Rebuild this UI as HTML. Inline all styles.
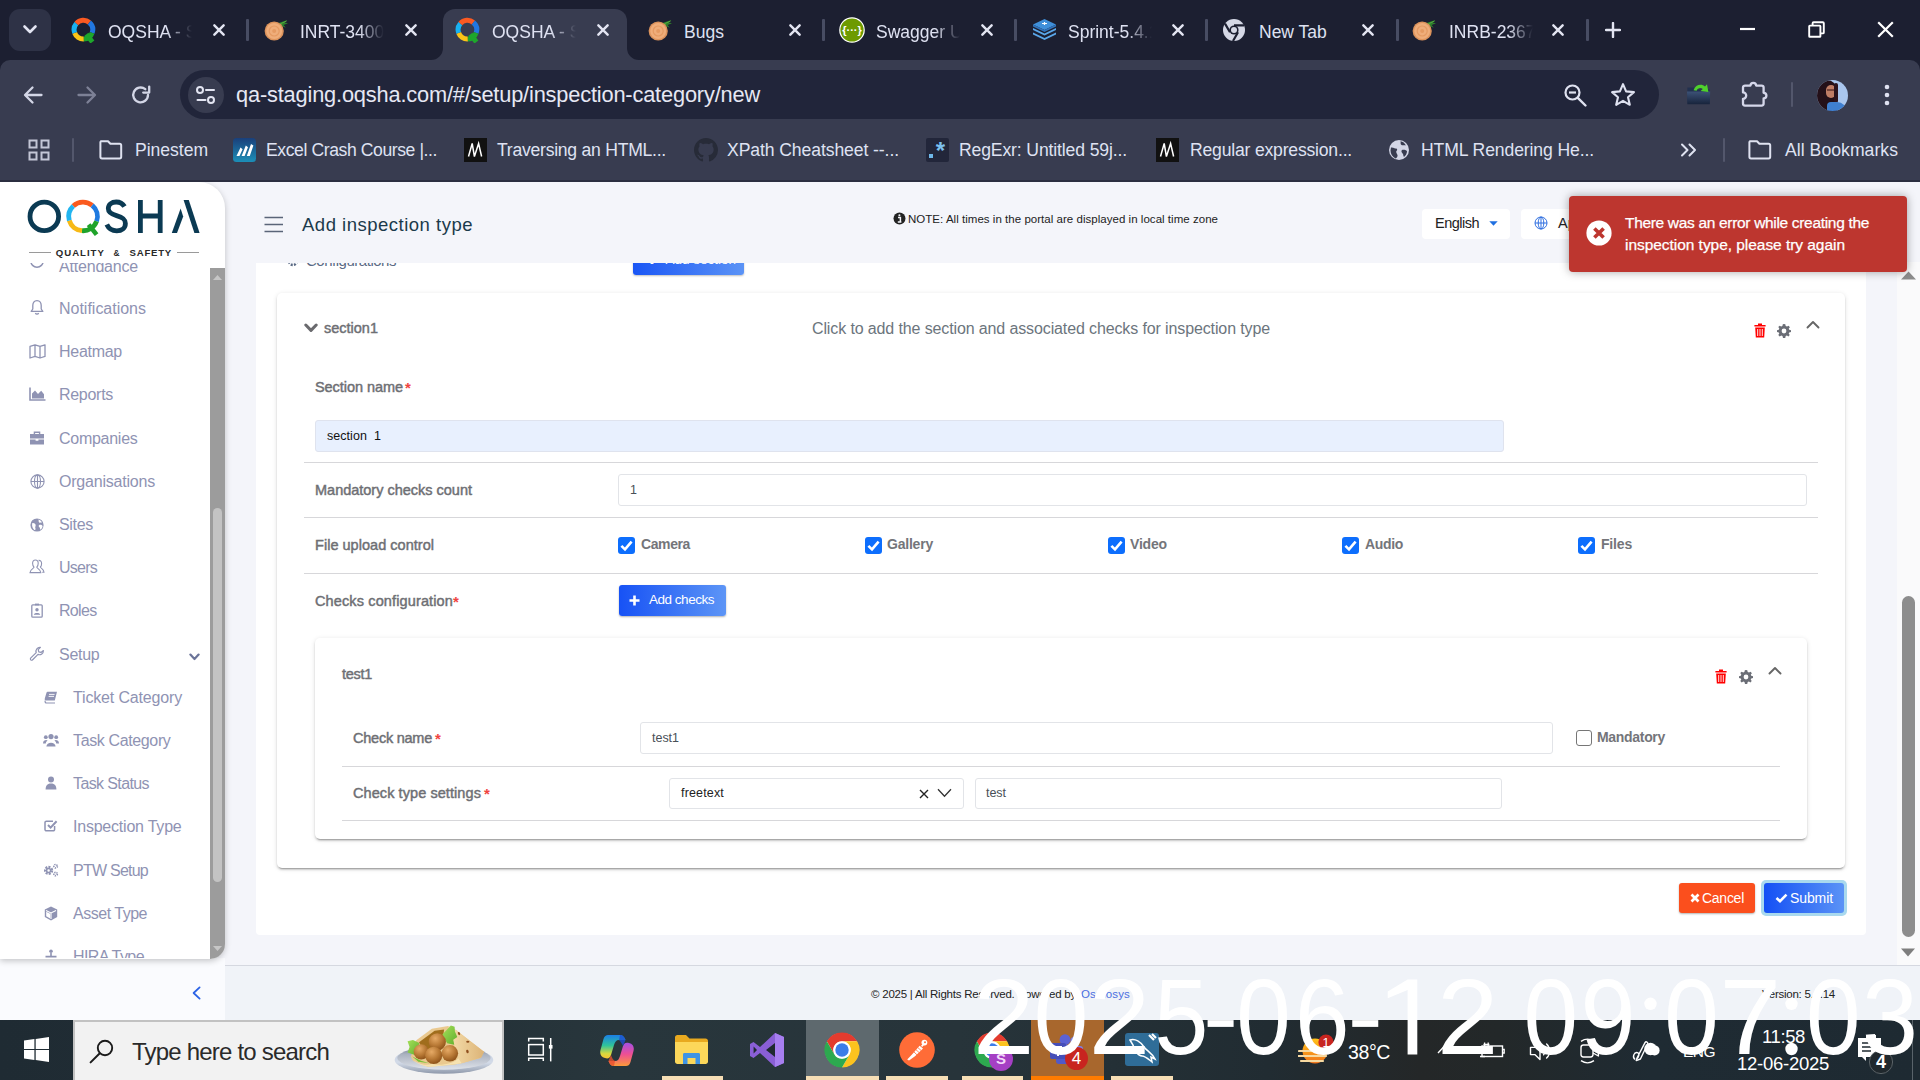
<!DOCTYPE html>
<html lang="en">
<head>
<meta charset="utf-8">
<title>OQSHA - Setup</title>
<style>
*{box-sizing:border-box;margin:0;padding:0}
html,body{width:1920px;height:1080px;overflow:hidden;background:#f4f5fa}
body{position:relative;font-family:"Liberation Sans",sans-serif;color:#222}
.abs{position:absolute}
.t{position:absolute;white-space:nowrap;line-height:1}
svg{display:block}
/* ---------- browser chrome ---------- */
#tabstrip{position:absolute;left:0;top:0;width:1920px;height:75px;background:#1c1f31}
#toolbar{position:absolute;left:0;top:60px;width:1920px;height:122px;background:#383c50;border-top-left-radius:10px}
#chromeline{position:absolute;left:0;top:180px;width:1920px;height:2px;background:#2b2e40}
.tabtxt{position:absolute;top:21px;font-size:17.5px;color:#dfe2f2;white-space:nowrap;line-height:22px;overflow:hidden}
.tabx{position:absolute;top:24px;width:12px;height:12px}
.tsep{position:absolute;top:19px;width:2.5px;height:22px;background:#484d63;border-radius:1px}
.bm{position:absolute;top:139px;font-size:17.6px;color:#dfe2f2;white-space:nowrap;line-height:22px}
/* ---------- page ---------- */
#page{position:absolute;left:0;top:182px;width:1920px;height:838px;background:#f4f5fa;overflow:hidden}
.side{position:absolute;font-size:16px;color:#8f93b3;white-space:nowrap;line-height:20px}
.lbl{position:absolute;font-size:14.5px;color:#6e6f74;white-space:nowrap;line-height:18px;-webkit-text-stroke:0.45px #6e6f74}
.hr{position:absolute;height:1px;background:#d7d7da}
.inp{position:absolute;background:#fff;border:1px solid #e2e4e8;border-radius:3px}
.itx{position:absolute;font-size:12.5px;color:#495057;white-space:nowrap;line-height:16px}
.cb{position:absolute;width:17px;height:17px;border-radius:3px;background:#0d6efd}
.cbl{position:absolute;font-size:14px;font-weight:bold;color:#74757a;white-space:nowrap;line-height:18px}
/* ---------- taskbar ---------- */
#taskbar{position:absolute;left:0;top:1020px;width:1920px;height:60px;background:linear-gradient(90deg,#1f2b33 0%,#222f36 20%,#28363c 32%,#27343a 50%,#212c32 66%,#242728 74%,#232829 78%,#1f2b33 86%,#1e2a32 100%);overflow:hidden}
.tbu{position:absolute;top:56px;height:4px;background:#f6deb5}
</style>
</head>
<body>
<!--PAGE-->
<!-- page background -->
<div class="abs" style="left:0;top:182px;width:1920px;height:838px;background:#f4f5fa"></div>

<!-- content scroll area -->
<div class="abs" id="content" style="left:225px;top:262px;width:1673px;height:703px;overflow:hidden">
 <div class="abs" style="left:-225px;top:-262px;width:1920px;height:1080px">
  <!-- white panel -->
  <div class="abs" style="left:256px;top:200px;width:1610px;height:735px;background:#fff;border-radius:0 0 4px 4px"></div>
  <!-- cut-off row above -->
  <div class="t" style="letter-spacing:-0.481px;left:306px;top:252px;font-size:15px;line-height:18px;color:#5a6a85">Configurations</div>
  <svg class="abs" style="left:287px;top:254px" width="12" height="14" viewBox="0 0 12 14"><circle cx="6" cy="7" r="4" fill="none" stroke="#5a6a85" stroke-width="2.5" stroke-dasharray="2 1.2"/></svg>
  <div class="abs" style="left:633px;top:244px;width:111px;height:31px;border-radius:3px;background:linear-gradient(90deg,#1a56f5,#5b93f6);box-shadow:0 1px 2px rgba(0,0,0,.25)"></div>
  <div class="t" style="left:646px;top:252px;font-size:13.5px;line-height:16px;color:#fff">✚ &nbsp;Add section</div>

  <!-- section card -->
  <div class="abs" style="left:277px;top:293px;width:1568px;height:575px;background:#fff;border-radius:5px;box-shadow:0 3px 1px -2px rgba(0,0,0,.2),0 2px 2px 0 rgba(0,0,0,.14),0 1px 5px 0 rgba(0,0,0,.12)"></div>
  <svg class="abs" style="left:304px;top:323px" width="14" height="10" viewBox="0 0 14 10"><path d="M1.8 2 L7 7.4 L12.2 2" fill="none" stroke="#6a6a6e" stroke-width="3" stroke-linecap="round" stroke-linejoin="round"/></svg>
  <div class="lbl" style="letter-spacing:-0.002px;left:324px;top:319px">section1</div>
  <div class="t" style="letter-spacing:-0.122px;left:812px;top:319px;font-size:16px;line-height:19px;color:#6c757d">Click to add the section and associated checks for inspection type</div>
  <svg class="abs" style="left:1754px;top:323px" width="12" height="15" viewBox="0 0 12 15"><use href="#trash"/></svg>
  <svg class="abs" style="left:1777px;top:324px" width="14" height="14" viewBox="0 0 14 14"><use href="#gear"/></svg>
  <svg class="abs" style="left:1806px;top:320px" width="14" height="9" viewBox="0 0 14 9"><path d="M1.5 7.5 L7 2 L12.5 7.5" fill="none" stroke="#666" stroke-width="1.9" stroke-linecap="round" stroke-linejoin="round"/></svg>

  <div class="lbl" style="letter-spacing:-0.056px;left:315px;top:378px">Section name</div>
  <div class="t" style="left:405px;top:379px;font-size:15px;line-height:18px;color:#f0453f;font-weight:bold">*</div>
  <div class="inp" style="left:315px;top:420px;width:1189px;height:32px;background:#e8f0fe;border-color:#dfe3ee"></div>
  <div class="itx" style="letter-spacing:0.048px;left:327px;top:428px;color:#111">section&nbsp;&nbsp;1</div>
  <div class="hr" style="left:304px;top:462px;width:1514px"></div>

  <div class="lbl" style="letter-spacing:-0.008px;left:315px;top:481px">Mandatory checks count</div>
  <div class="inp" style="left:618px;top:474px;width:1189px;height:32px"></div>
  <div class="itx" style="left:630px;top:482px">1</div>
  <div class="hr" style="left:304px;top:517px;width:1514px"></div>

  <div class="lbl" style="letter-spacing:0.026px;left:315px;top:536px">File upload control</div>
  <div class="cb" style="left:618px;top:537px"><svg width="17" height="17" viewBox="0 0 17 17"><use href="#chk"/></svg></div>
  <div class="cbl" style="letter-spacing:-0.396px;left:641px;top:535px">Camera</div>
  <div class="cb" style="left:865px;top:537px"><svg width="17" height="17" viewBox="0 0 17 17"><use href="#chk"/></svg></div>
  <div class="cbl" style="letter-spacing:-0.212px;left:887px;top:535px">Gallery</div>
  <div class="cb" style="left:1108px;top:537px"><svg width="17" height="17" viewBox="0 0 17 17"><use href="#chk"/></svg></div>
  <div class="cbl" style="letter-spacing:-0.175px;left:1130px;top:535px">Video</div>
  <div class="cb" style="left:1342px;top:537px"><svg width="17" height="17" viewBox="0 0 17 17"><use href="#chk"/></svg></div>
  <div class="cbl" style="letter-spacing:-0.331px;left:1365px;top:535px">Audio</div>
  <div class="cb" style="left:1578px;top:537px"><svg width="17" height="17" viewBox="0 0 17 17"><use href="#chk"/></svg></div>
  <div class="cbl" style="letter-spacing:-0.181px;left:1601px;top:535px">Files</div>
  <div class="hr" style="left:304px;top:573px;width:1514px"></div>

  <div class="lbl" style="letter-spacing:0.129px;left:315px;top:592px">Checks configuration</div>
  <div class="t" style="left:453px;top:593px;font-size:15px;line-height:18px;color:#f0453f;font-weight:bold">*</div>
  <div class="abs" style="left:618.6px;top:585.4px;width:107px;height:30.8px;border-radius:3px;background:linear-gradient(90deg,#1752f5,#5d95f6);box-shadow:0 1px 2px rgba(0,0,0,.3)"></div>
  <svg class="abs" style="left:629px;top:595px" width="11" height="11" viewBox="0 0 11 11"><path d="M5.5 0.5 V10.5 M0.5 5.5 H10.5" stroke="#fff" stroke-width="2.6"/></svg>
  <div class="t" style="letter-spacing:-0.480px;left:649px;top:592px;font-size:13.5px;line-height:16px;color:#fff">Add checks</div>

  <!-- inner check card -->
  <div class="abs" style="left:315px;top:638px;width:1492px;height:201px;background:#fff;border-radius:5px;box-shadow:0 3px 1px -2px rgba(0,0,0,.2),0 2px 2px 0 rgba(0,0,0,.14),0 1px 5px 0 rgba(0,0,0,.12)"></div>
  <div class="lbl" style="letter-spacing:-0.287px;left:342px;top:665px">test1</div>
  <svg class="abs" style="left:1715px;top:669px" width="12" height="15" viewBox="0 0 12 15"><use href="#trash"/></svg>
  <svg class="abs" style="left:1739px;top:670px" width="14" height="14" viewBox="0 0 14 14"><use href="#gear"/></svg>
  <svg class="abs" style="left:1768px;top:666px" width="14" height="9" viewBox="0 0 14 9"><path d="M1.5 7.5 L7 2 L12.5 7.5" fill="none" stroke="#666" stroke-width="1.9" stroke-linecap="round" stroke-linejoin="round"/></svg>

  <div class="lbl" style="letter-spacing:-0.241px;left:353px;top:729px">Check name</div>
  <div class="t" style="left:435px;top:730px;font-size:15px;line-height:18px;color:#f0453f;font-weight:bold">*</div>
  <div class="inp" style="left:640px;top:722px;width:913px;height:32px"></div>
  <div class="itx" style="letter-spacing:-0.022px;left:652px;top:730px">test1</div>
  <div class="abs" style="left:1575.5px;top:730px;width:16px;height:16px;border:1.6px solid #767676;border-radius:3px;background:#fff"></div>
  <div class="cbl" style="letter-spacing:-0.311px;left:1597px;top:728px">Mandatory</div>
  <div class="hr" style="left:342px;top:766px;width:1438px"></div>

  <div class="lbl" style="letter-spacing:0.076px;left:353px;top:784px">Check type settings</div>
  <div class="t" style="left:484px;top:785px;font-size:15px;line-height:18px;color:#f0453f;font-weight:bold">*</div>
  <div class="inp" style="left:669px;top:778px;width:295px;height:31px"></div>
  <div class="itx" style="letter-spacing:0.164px;left:681px;top:785px;color:#222">freetext</div>
  <svg class="abs" style="left:919px;top:789px" width="10" height="10" viewBox="0 0 10 10"><path d="M1 1 L9 9 M9 1 L1 9" stroke="#222" stroke-width="1.4"/></svg>
  <svg class="abs" style="left:937px;top:788px" width="15" height="10" viewBox="0 0 15 10"><path d="M1 1.2 L7.5 8.2 L14 1.2" fill="none" stroke="#333" stroke-width="1.3"/></svg>
  <div class="inp" style="left:975px;top:778px;width:527px;height:31px"></div>
  <div class="itx" style="letter-spacing:-0.039px;left:986px;top:785px">test</div>
  <div class="hr" style="left:342px;top:820px;width:1438px"></div>

  <!-- buttons -->
  <div class="abs" style="left:1679px;top:883px;width:76px;height:30px;border-radius:3px;background:#fb4f1d;box-shadow:0 1px 2px rgba(0,0,0,.3)"></div>
  <svg class="abs" style="left:1690px;top:893px" width="10" height="10" viewBox="0 0 10 10"><path d="M1.5 1.5 L8.5 8.5 M8.5 1.5 L1.5 8.5" stroke="#fff" stroke-width="2.7"/></svg>
  <div class="t" style="letter-spacing:-0.266px;left:1702px;top:890px;font-size:14px;line-height:16px;color:#fff">Cancel</div>
  <div class="abs" style="left:1761px;top:880px;width:86px;height:36px;border-radius:5px;background:#a9d9ee"></div>
  <div class="abs" style="left:1764px;top:883px;width:80px;height:30px;border-radius:3px;background:linear-gradient(90deg,#1450f5,#5b93f6)"></div>
  <svg class="abs" style="left:1775px;top:893px" width="13" height="10" viewBox="0 0 13 10"><path d="M1.5 5 L5 8.2 L11.5 1.6" fill="none" stroke="#fff" stroke-width="2.6"/></svg>
  <div class="t" style="letter-spacing:-0.096px;left:1790px;top:890px;font-size:14px;line-height:16px;color:#fff">Submit</div>
 </div>
</div>

<!-- header overlay -->
<div class="abs" style="left:225px;top:182px;width:1695px;height:81px;background:#f4f5fa"></div>
<svg class="abs" style="left:264px;top:216px" width="20" height="17" viewBox="0 0 20 17"><path d="M0.5 1.5 H19 M0.5 8.5 H19 M0.5 15.5 H19" stroke="#5a6578" stroke-width="1.5"/></svg>
<div class="t" style="letter-spacing:0.502px;left:302px;top:214px;font-size:18.5px;line-height:22px;color:#1b3a4b">Add inspection type</div>
<svg class="abs" style="left:893px;top:212px" width="13" height="13" viewBox="0 0 13 13"><circle cx="6.5" cy="6.5" r="6" fill="#222"/><path d="M5 5.6 H7.4 V9.8 M4.8 10 H8.4" stroke="#f4f5fa" stroke-width="1.5" fill="none"/><circle cx="6.4" cy="3.2" r="1.05" fill="#f4f5fa"/></svg>
<div class="t" style="letter-spacing:0.031px;left:908px;top:212px;font-size:11.5px;line-height:14px;color:#222">NOTE: All times in the portal are displayed in local time zone</div>
<div class="abs" style="left:1422px;top:209px;width:88px;height:30px;border-radius:4px;background:#fff"></div>
<div class="t" style="letter-spacing:-0.509px;left:1435px;top:215px;font-size:14.5px;line-height:17px;color:#222">English</div>
<svg class="abs" style="left:1489px;top:221px" width="9" height="5" viewBox="0 0 9 5"><path d="M0.3 0.3 H8.7 L4.5 4.7Z" fill="#1f6fe0"/></svg>
<div class="abs" style="left:1521px;top:209px;width:120px;height:30px;border-radius:4px;background:#fff"></div>
<svg class="abs" style="left:1534px;top:216px" width="14" height="14" viewBox="0 0 14 14"><g fill="none" stroke="#2f6fe0" stroke-width="1"><circle cx="7" cy="7" r="6"/><ellipse cx="7" cy="7" rx="2.8" ry="6"/><path d="M1 7 H13 M7 1 V13"/></g></svg>
<div class="t" style="left:1558px;top:215px;font-size:14.5px;line-height:17px;color:#222">Ap</div>

<!-- page scrollbar -->
<div class="abs" style="left:1897px;top:262px;width:23px;height:703px;background:#fafafb"></div>
<svg class="abs" style="left:1900.5px;top:270.5px" width="15" height="9" viewBox="0 0 15 9"><path d="M0 8.5 L7.5 0.5 L15 8.5Z" fill="#8c8c8c"/></svg>
<div class="abs" style="left:1902px;top:596px;width:13px;height:341px;border-radius:7px;background:#8d8d8d"></div>
<svg class="abs" style="left:1901px;top:948px" width="14" height="9" viewBox="0 0 14 9"><path d="M0 0.5 L7 8.5 L14 0.5Z" fill="#7e7e7e"/></svg>

<!-- toast -->
<div class="abs" style="left:1569px;top:196px;width:338px;height:76px;border-radius:4px;background:#bd362f;box-shadow:0 0 10px rgba(0,0,0,.35)"></div>
<svg class="abs" style="left:1586px;top:220px" width="26" height="26" viewBox="0 0 26 26"><circle cx="13" cy="13" r="12.6" fill="#fff"/><path d="M8.4 8.4 L17.6 17.6 M17.6 8.4 L8.4 17.6" stroke="#bd362f" stroke-width="3.6"/></svg>
<div class="t" style="letter-spacing:-0.321px;left:1625px;top:213px;font-size:15.5px;line-height:19px;color:#fff;-webkit-text-stroke:0.25px #fff">There was an error while creating the</div>
<div class="t" style="letter-spacing:-0.044px;left:1625px;top:235px;font-size:15.5px;line-height:19px;color:#fff;-webkit-text-stroke:0.25px #fff">inspection type, please try again</div>

<!-- footer -->
<div class="abs" style="left:225px;top:965px;width:1695px;height:55px;background:#f0f3f8;border-top:1px solid #d5d8e0"></div>
<div class="t" style="letter-spacing:-0.228px;left:871px;top:987px;font-size:11.5px;line-height:14px;color:#222">© 2025 | All Rights Reserved. Powered by</div>
<div class="t" style="letter-spacing:0.154px;left:1081px;top:987px;font-size:11.5px;line-height:14px;color:#4a6ee0">Osmosys</div>
<div class="t" style="letter-spacing:-0.249px;left:1762px;top:987px;font-size:11.5px;line-height:14px;color:#222">Version: 5.4.14</div>

<!-- sidebar -->
<div class="abs" style="left:0;top:958px;width:225px;height:62px;background:#fafbfe"></div>
<div class="abs" style="left:0;top:182px;width:225px;height:777px;background:#fff;border-radius:0 26px 16px 0;box-shadow:0 2px 6px rgba(0,0,0,.22)"></div>
<svg class="abs" style="left:191px;top:985px" width="11" height="16" viewBox="0 0 11 16"><path d="M8.6 2.4 L2.6 8 L8.6 13.6" fill="none" stroke="#2b63e6" stroke-width="1.8" stroke-linecap="round" stroke-linejoin="round"/></svg>
<!-- logo -->
<svg class="abs" style="left:20px;top:192px" width="190" height="72" viewBox="20 192 190 72">
  <circle cx="44.3" cy="216.4" r="14.3" fill="none" stroke="#0b3a53" stroke-width="4.8"/>
  <g fill="none" stroke-width="4.8">
    <path d="M73.3 205.9 A14.3 14.3 0 0 1 92.2 205.4" stroke="#fa5a1e"/>
    <path d="M92.2 205.4 A14.3 14.3 0 0 1 96.6 221.3" stroke="#1f7ae0"/>
    <path d="M96.6 221.3 A14.3 14.3 0 0 1 82 230.7" stroke="#1fa32a"/>
    <path d="M82 230.7 A14.3 14.3 0 0 1 69.3 220.5" stroke="#f7b916"/>
    <path d="M69.3 220.5 A14.3 14.3 0 0 1 73.3 205.9" stroke="#22b5f0"/>
    <path d="M88.6 224.6 L96.6 234.6" stroke="#1fa32a" stroke-width="4.6"/>
  </g>
  <path d="M124.5 206.5 C122.5 203.3 119.6 202 116.3 202 C111.5 202 108.3 204.8 108.3 208.6 C108.3 212.6 111.2 214.2 116.5 215.6 C122.5 217.2 125.4 219 125.4 223.6 C125.4 228 121.8 230.9 116.8 230.9 C112.2 230.9 108.6 228.6 106.8 224.6" fill="none" stroke="#0b3a53" stroke-width="4.8"/>
  <path d="M140.4 200 V233 M160.2 200 V233 M140.4 216 H160.2" fill="none" stroke="#0b3a53" stroke-width="4.8"/>
  <path d="M183.6 200 H188.8 L199.6 233 H194.4Z" fill="#0b3a53"/>
  <path d="M171.8 233 L180.6 208.5 L183.2 216.6 L177 233Z" fill="#0b3a53"/>
  <path d="M29 252.5 H51 M177 252.5 H199" stroke="#9a9a9a" stroke-width="1"/>
  <g font-family="Liberation Sans" font-weight="bold" font-size="9.6" fill="#2a2a2a"><text x="55.8" y="256" textLength="48" lengthAdjust="spacing">QUALITY</text><text x="113.5" y="256" textLength="6" lengthAdjust="spacingAndGlyphs">&amp;</text><text x="129.6" y="256" textLength="41.6" lengthAdjust="spacing">SAFETY</text></g>
</svg>

<!-- sidebar scroll list -->
<div class="abs" style="left:0;top:263px;width:210px;height:695px;overflow:hidden">
 <div class="abs" style="left:0;top:-263px;width:225px;height:1080px">
  <svg class="abs" style="left:29px;top:253px" width="16" height="16" viewBox="0 0 16 16"><circle cx="8" cy="8" r="6.2" fill="none" stroke="#8f93b3" stroke-width="1.5"/></svg>
  <div class="side" style="letter-spacing:-0.195px;left:59px;top:257px">Attendance</div>

  <svg class="abs" style="left:30px;top:299px" width="14" height="17" viewBox="0 0 14 17"><path d="M7 1.6 C4 1.6 2.8 4 2.8 6.6 V10 L1.2 12.4 H12.8 L11.2 10 V6.6 C11.2 4 10 1.6 7 1.6Z" fill="none" stroke="#8f93b3" stroke-width="1.3" stroke-linejoin="round"/><path d="M5.4 14 A1.7 1.7 0 0 0 8.6 14" fill="none" stroke="#8f93b3" stroke-width="1.3"/></svg>
  <div class="side" style="letter-spacing:-0.012px;left:59px;top:299px">Notifications</div>

  <svg class="abs" style="left:29px;top:344px" width="17" height="15" viewBox="0 0 17 15"><path d="M1 2.4 L6 0.8 L11 2.4 L16 0.8 V12.4 L11 14 L6 12.4 L1 14Z M6 0.8 V12.4 M11 2.4 V14" fill="none" stroke="#8f93b3" stroke-width="1.3" stroke-linejoin="round"/></svg>
  <div class="side" style="letter-spacing:-0.275px;left:59px;top:342px">Heatmap</div>

  <svg class="abs" style="left:29px;top:387px" width="17" height="14" viewBox="0 0 17 14"><path d="M1 0.5 V13 H16.5" fill="none" stroke="#8f93b3" stroke-width="1.6"/><path d="M3 11.4 V6.5 L6 3.4 L9 7 L12.2 3.8 L15 7.2 V11.4Z" fill="#8f93b3"/></svg>
  <div class="side" style="letter-spacing:-0.290px;left:59px;top:385px">Reports</div>

  <svg class="abs" style="left:29px;top:431px" width="16" height="14" viewBox="0 0 16 14"><path d="M5.4 3 V1.2 H10.6 V3" fill="none" stroke="#8f93b3" stroke-width="1.4"/><path d="M1 3 H15 V7.4 H1Z M1 8.6 H6.6 V9.8 H9.4 V8.6 H15 V13.4 H1Z" fill="#8f93b3"/></svg>
  <div class="side" style="letter-spacing:-0.271px;left:59px;top:429px">Companies</div>

  <svg class="abs" style="left:30px;top:474px" width="15" height="15" viewBox="0 0 15 15"><g fill="none" stroke="#8f93b3" stroke-width="1.1"><circle cx="7.5" cy="7.5" r="6.6"/><ellipse cx="7.5" cy="7.5" rx="3" ry="6.6"/><path d="M1 7.5 H14 M7.5 1 V14"/></g></svg>
  <div class="side" style="letter-spacing:-0.209px;left:59px;top:472px">Organisations</div>

  <svg class="abs" style="left:30px;top:518px" width="14" height="14" viewBox="0 0 14 14"><circle cx="7" cy="7" r="6.6" fill="#8f93b3"/><path d="M2.2 5.2 C3.5 4.6 5.2 5.4 5.6 6.8 C6 8.2 4.8 9 5.4 10.2 C5.9 11.2 5 12.4 4.4 12 C2.8 10.8 1.6 8 2.2 5.2Z M8.4 1.6 C9 2.8 8.2 3.6 9.2 4.4 C10.2 5.2 11.4 4 12.2 5 C11.6 3.2 10.2 2 8.4 1.6Z M9.2 7 C10.4 6.4 12 7 12.6 8 C12.4 9.8 11.6 11 10.4 11.8 C9.8 10.8 10.2 9.8 9.4 9.2 C8.6 8.6 8.4 7.5 9.2 7Z" fill="#fff"/></svg>
  <div class="side" style="letter-spacing:-0.316px;left:59px;top:515px">Sites</div>

  <svg class="abs" style="left:29px;top:559px" width="16" height="15" viewBox="0 0 16 15"><g fill="none" stroke="#8f93b3" stroke-width="1.1"><path d="M6.4 1 C8.2 1 9.2 2.4 9.2 4.2 C9.2 6 8.4 7.6 7.8 8.2 C8 9.6 11.6 10 11.8 13.6 H1 C1.2 10 4.8 9.6 5 8.2 C4.4 7.6 3.6 6 3.6 4.2 C3.6 2.4 4.6 1 6.4 1Z"/><path d="M9.6 1.4 C11.4 1.2 12.6 2.6 12.6 4.4 C12.6 6 12 7.4 11.4 8 C11.6 9.4 14.8 9.8 15 13.2 H13.2"/></g></svg>
  <div class="side" style="letter-spacing:-0.756px;left:59px;top:558px">Users</div>

  <svg class="abs" style="left:31px;top:603px" width="12" height="15" viewBox="0 0 12 15"><rect x="0.8" y="1.8" width="10.4" height="12.4" rx="1" fill="none" stroke="#8f93b3" stroke-width="1.3"/><path d="M4 0.6 H8 V2.4 H4Z" fill="#8f93b3"/><circle cx="6" cy="6.8" r="1.7" fill="#8f93b3"/><path d="M2.8 11.8 C2.8 9.4 9.2 9.4 9.2 11.8Z" fill="#8f93b3"/></svg>
  <div class="side" style="letter-spacing:-0.681px;left:59px;top:601px">Roles</div>

  <svg class="abs" style="left:29px;top:646px" width="16" height="16" viewBox="0 0 16 16"><path d="M14.4 4.6 A3.9 3.9 0 0 1 9 8.4 L3.4 14 A1.3 1.3 0 0 1 1.6 12.2 L7.2 6.6 A3.9 3.9 0 0 1 11.4 1.4 L9.2 3.6 L9.8 5.8 L12 6.4Z" fill="none" stroke="#8f93b3" stroke-width="1.2" stroke-linejoin="round"/></svg>
  <div class="side" style="letter-spacing:-0.263px;left:59px;top:645px">Setup</div>
  <svg class="abs" style="left:189px;top:653px" width="11" height="8" viewBox="0 0 11 8"><path d="M1.4 1.6 L5.5 6 L9.6 1.6" fill="none" stroke="#6b7499" stroke-width="2.2" stroke-linecap="round" stroke-linejoin="round"/></svg>

  <svg class="abs" style="left:44px;top:691px" width="14" height="13" viewBox="0 0 14 13"><path d="M3.6 0.8 H13 L10.8 9.4 H1.6 C0.4 9.4 0.6 8 1 6.8 L2.4 2 C2.6 1.2 3 0.8 3.6 0.8Z" fill="#8f93b3"/><path d="M1.2 9.6 C0.8 11.2 1.4 12 2.6 12 H11" fill="none" stroke="#8f93b3" stroke-width="1.2"/><path d="M5 3.4 H10.6 M4.6 5.4 H10" stroke="#fff" stroke-width="0.9"/></svg>
  <div class="side" style="letter-spacing:-0.164px;left:73px;top:688px">Ticket Category</div>

  <svg class="abs" style="left:43px;top:733px" width="16" height="14" viewBox="0 0 16 14"><g fill="#8f93b3"><circle cx="8" cy="3.6" r="2.6"/><path d="M3.4 13.6 C3.4 8.4 12.6 8.4 12.6 13.6Z"/><circle cx="2.8" cy="4.2" r="1.9"/><path d="M0 10.4 C0 6.6 4 6.6 4.6 7.6 C3.2 8.4 2.8 9.6 2.8 10.4Z"/><circle cx="13.2" cy="4.2" r="1.9"/><path d="M16 10.4 C16 6.6 12 6.6 11.4 7.6 C12.8 8.4 13.2 9.6 13.2 10.4Z"/></g></svg>
  <div class="side" style="letter-spacing:-0.367px;left:73px;top:731px">Task Category</div>

  <svg class="abs" style="left:45px;top:776px" width="12" height="14" viewBox="0 0 12 14"><circle cx="6" cy="3.6" r="3" fill="#8f93b3"/><path d="M0.6 13.4 C0.6 10 2 7.4 6 7.4 C10 7.4 11.4 10 11.4 13.4Z" fill="#8f93b3"/></svg>
  <div class="side" style="letter-spacing:-0.609px;left:73px;top:774px">Task Status</div>

  <svg class="abs" style="left:44px;top:819px" width="14" height="13" viewBox="0 0 14 13"><path d="M10.6 7 V10.4 A1.4 1.4 0 0 1 9.2 11.8 H2.4 A1.4 1.4 0 0 1 1 10.4 V3.6 A1.4 1.4 0 0 1 2.4 2.2 H9" fill="none" stroke="#8f93b3" stroke-width="1.5"/><path d="M4 6 L6.6 8.6 L12.6 2.2" fill="none" stroke="#8f93b3" stroke-width="2"/></svg>
  <div class="side" style="letter-spacing:-0.219px;left:73px;top:817px">Inspection Type</div>

  <svg class="abs" style="left:43px;top:863px" width="16" height="14" viewBox="0 0 16 14"><circle cx="5.6" cy="7.4" r="3.3" fill="none" stroke="#8f93b3" stroke-width="2.6" stroke-dasharray="1.9 1.1"/><circle cx="5.6" cy="7.4" r="2" fill="none" stroke="#8f93b3" stroke-width="1.5"/><circle cx="12.6" cy="3.2" r="1.7" fill="none" stroke="#8f93b3" stroke-width="1.7" stroke-dasharray="1.2 0.8"/><circle cx="12.6" cy="11" r="1.7" fill="none" stroke="#8f93b3" stroke-width="1.7" stroke-dasharray="1.2 0.8"/></svg>
  <div class="side" style="letter-spacing:-0.757px;left:73px;top:861px">PTW Setup</div>

  <svg class="abs" style="left:44px;top:906px" width="14" height="15" viewBox="0 0 14 15"><path d="M7 0.6 L13.2 3.6 V11 L7 14.4 L0.8 11 V3.6Z" fill="#8f93b3"/><path d="M2 4.4 L7 6.9 L12 4.4 M7 6.9 V13" fill="none" stroke="#fff" stroke-width="1.1"/><path d="M2.2 5.8 L6.2 7.8 V12.4 L2.2 10.2Z" fill="#fff"/></svg>
  <div class="side" style="letter-spacing:-0.486px;left:73px;top:904px">Asset Type</div>

  <svg class="abs" style="left:45px;top:949px" width="12" height="14" viewBox="0 0 12 14"><circle cx="6" cy="2.2" r="1.8" fill="#8f93b3"/><path d="M6 4 V8 M0.5 7.6 H11.5" stroke="#8f93b3" stroke-width="1.6"/></svg>
  <div class="side" style="letter-spacing:-0.576px;left:73px;top:947px">HIRA Type</div>
 </div>
</div>
<!-- sidebar scrollbar -->
<div class="abs" style="left:210px;top:268px;width:15px;height:691px;background:#9c9c9c;border-radius:0 0 15px 0"></div>
<svg class="abs" style="left:213px;top:275px" width="9" height="5" viewBox="0 0 9 5"><path d="M0 5 L4.5 0 L9 5Z" fill="#c6c6c6"/></svg>
<div class="abs" style="left:213px;top:508px;width:9px;height:374px;border-radius:5px;background:#c3c3c3"></div>
<svg class="abs" style="left:213px;top:946px" width="9" height="5" viewBox="0 0 9 5"><path d="M0 0 L4.5 5 L9 0Z" fill="#c6c6c6"/></svg>


<!-- page-level shared symbols -->
<svg width="0" height="0" style="position:absolute">
  <defs>
    <symbol id="chk" viewBox="0 0 17 17"><path d="M3.4 8.8 L7 12.4 L13.6 4.6" fill="none" stroke="#fff" stroke-width="2.6" stroke-linecap="butt" stroke-linejoin="miter"/></symbol>
    <symbol id="trash" viewBox="0 0 12 15"><path d="M4 0.6 H8 V2 H11.6 V3.6 H0.4 V2 H4Z M1.2 4.6 H10.8 L10.2 14.4 H1.8Z" fill="#f00"/><path d="M3.7 6 V13 M6 6 V13 M8.3 6 V13" stroke="#fff" stroke-width="0.9"/></symbol>
    <symbol id="gear" viewBox="0 0 14 14"><path d="M7 0 L8.3 0.2 L8.7 2 L10 2.6 L11.6 1.7 L12.9 3.2 L11.8 4.6 L12.2 5.8 L14 6.2 V8 L12.2 8.4 L11.7 9.6 L12.7 11.1 L11.4 12.5 L9.9 11.6 L8.7 12.1 L8.2 13.9 H6 L5.5 12.1 L4.3 11.6 L2.7 12.5 L1.3 11.1 L2.3 9.6 L1.8 8.4 L0 8 V6.2 L1.8 5.8 L2.3 4.6 L1.3 3.1 L2.6 1.7 L4.2 2.6 L5.4 2 L5.8 0.2Z M7 4.6 A2.4 2.4 0 1 0 7 9.4 A2.4 2.4 0 1 0 7 4.6Z" fill="#6b6e76" fill-rule="evenodd"/></symbol>
  </defs>
</svg>

<!--/PAGE-->
<!--CHROME-->
<div id="tabstrip">
  <!-- tab search -->
  <div class="abs" style="left:9px;top:9px;width:42px;height:42px;border-radius:11px;background:#2e3246"></div>
  <svg class="abs" style="left:22px;top:24px" width="16" height="12" viewBox="0 0 16 12"><path d="M2.5 2.5 L8 8 L13.5 2.5" fill="none" stroke="#e3e5f2" stroke-width="2.6" stroke-linecap="round" stroke-linejoin="round"/></svg>
  <!-- active tab -->
  <div class="abs" style="left:443px;top:9px;width:184px;height:51px;background:#383c50;border-radius:12px 12px 0 0"></div>
  <svg class="abs" style="left:431px;top:48px" width="12" height="12" viewBox="0 0 12 12"><path d="M12 0 V12 H0 A12 12 0 0 0 12 0Z" fill="#383c50"/></svg>
  <svg class="abs" style="left:627px;top:48px" width="12" height="12" viewBox="0 0 12 12"><path d="M0 0 V12 H12 A12 12 0 0 1 0 0Z" fill="#383c50"/></svg>

  <!-- favicons -->
  <svg class="abs fq" style="left:71px;top:17px" width="26" height="26" viewBox="0 0 26 26"><use href="#qfav"/></svg>
  <svg class="abs" style="left:263px;top:17px" width="26" height="26" viewBox="0 0 26 26"><use href="#woodfav"/></svg>
  <svg class="abs fq" style="left:455px;top:17px" width="26" height="26" viewBox="0 0 26 26"><use href="#qfav"/></svg>
  <svg class="abs" style="left:647px;top:17px" width="26" height="26" viewBox="0 0 26 26"><use href="#woodfav"/></svg>
  <svg class="abs" style="left:839px;top:17px" width="26" height="26" viewBox="0 0 26 26"><circle cx="13" cy="13" r="12.2" fill="#6d9a00" stroke="#fff" stroke-width="1.2"/><text x="13" y="17" font-size="11" font-family="Liberation Sans" font-weight="bold" text-anchor="middle" fill="#fff">{···}</text></svg>
  <svg class="abs" style="left:1031px;top:17px" width="27" height="26" viewBox="0 0 27 26"><path d="M13.5 2 L25 7.5 L13.5 13 L2 7.5Z" fill="#3f8fd9"/><path d="M2 11 L13.5 16.5 L25 11 L25 13 L13.5 18.5 L2 13Z" fill="#5aa7ea"/><path d="M2 15.5 L13.5 21 L25 15.5 L25 17.5 L13.5 23 L2 17.5Z" fill="#5aa7ea"/><path d="M2 7.5 L13.5 13 L25 7.5 L25 9.5 L13.5 15 L2 9.5Z" fill="#2f73bd"/><path d="M11 6.5 h5 M13.5 5 v3" stroke="#fff" stroke-width="1.2"/></svg>
  <svg class="abs" style="left:1222px;top:18px" width="24" height="24" viewBox="0 0 24 24"><circle cx="12" cy="12" r="11" fill="#d5d8e6"/><circle cx="12" cy="12" r="4.6" fill="#1c1f31" stroke="#d5d8e6" stroke-width="0"/><path d="M12 7.4 H22 M8 14.3 L3 5.6 M16 14.3 L11 23" stroke="#1c1f31" stroke-width="2.2" fill="none"/><circle cx="12" cy="12" r="3" fill="#d5d8e6"/></svg>
  <svg class="abs" style="left:1411px;top:17px" width="26" height="26" viewBox="0 0 26 26"><use href="#woodfav"/></svg>

  <!-- titles -->
  <div class="tabtxt" style="left:108px;width:84px;-webkit-mask-image:linear-gradient(90deg,#000 70%,transparent 100%)">OQSHA - S</div>
  <div class="tabtxt" style="left:300px;width:84px;-webkit-mask-image:linear-gradient(90deg,#000 70%,transparent 100%)">INRT-3400</div>
  <div class="tabtxt" style="left:492px;width:84px;-webkit-mask-image:linear-gradient(90deg,#000 70%,transparent 100%)">OQSHA - S</div>
  <div class="tabtxt" style="left:684px;width:84px">Bugs</div>
  <div class="tabtxt" style="left:876px;width:84px;-webkit-mask-image:linear-gradient(90deg,#000 70%,transparent 100%)">Swagger U</div>
  <div class="tabtxt" style="left:1068px;width:84px;-webkit-mask-image:linear-gradient(90deg,#000 70%,transparent 100%)">Sprint-5.4.1</div>
  <div class="tabtxt" style="left:1259px;width:84px">New Tab</div>
  <div class="tabtxt" style="left:1449px;width:84px;-webkit-mask-image:linear-gradient(90deg,#000 70%,transparent 100%)">INRB-2367</div>

  <!-- close buttons -->
  <svg class="tabx" style="left:213px" viewBox="0 0 14 14"><use href="#xico"/></svg>
  <svg class="tabx" style="left:405px" viewBox="0 0 14 14"><use href="#xico"/></svg>
  <svg class="tabx" style="left:597px" viewBox="0 0 14 14"><use href="#xico"/></svg>
  <svg class="tabx" style="left:789px" viewBox="0 0 14 14"><use href="#xico"/></svg>
  <svg class="tabx" style="left:981px" viewBox="0 0 14 14"><use href="#xico"/></svg>
  <svg class="tabx" style="left:1172px" viewBox="0 0 14 14"><use href="#xico"/></svg>
  <svg class="tabx" style="left:1362px" viewBox="0 0 14 14"><use href="#xico"/></svg>
  <svg class="tabx" style="left:1552px" viewBox="0 0 14 14"><use href="#xico"/></svg>

  <!-- separators -->
  <div class="tsep" style="left:246px"></div>
  <div class="tsep" style="left:822px"></div>
  <div class="tsep" style="left:1014px"></div>
  <div class="tsep" style="left:1205px"></div>
  <div class="tsep" style="left:1396px"></div>
  <div class="tsep" style="left:1586px"></div>

  <!-- new tab + -->
  <svg class="abs" style="left:1605px;top:22px" width="16" height="16" viewBox="0 0 16 16"><path d="M8 1 V15 M1 8 H15" stroke="#e3e5f2" stroke-width="2.4" stroke-linecap="round"/></svg>
  <!-- window controls -->
  <svg class="abs" style="left:1739px;top:27px" width="17" height="4" viewBox="0 0 17 4"><path d="M1 2 H16" stroke="#fff" stroke-width="2.2"/></svg>
  <svg class="abs" style="left:1808px;top:21px" width="17" height="17" viewBox="0 0 17 17"><rect x="1.2" y="4.6" width="11.2" height="11.2" rx="0.6" fill="none" stroke="#fff" stroke-width="1.9"/><path d="M4.6 4.2 V2.2 A1 1 0 0 1 5.6 1.2 H14.8 A1 1 0 0 1 15.8 2.2 V11.4 A1 1 0 0 1 14.8 12.4 H12.8" fill="none" stroke="#fff" stroke-width="1.9"/></svg>
  <svg class="abs" style="left:1877px;top:21px" width="17" height="17" viewBox="0 0 17 17"><path d="M1.2 1.2 L15.8 15.8 M15.8 1.2 L1.2 15.8" stroke="#fff" stroke-width="2.2"/></svg>
</div>

<div id="toolbar" style="border-top-right-radius:10px">
  <!-- nav -->
  <svg class="abs" style="left:23px;top:25px" width="20" height="20" viewBox="0 0 20 20"><path d="M18.5 10 H2.5 M9.5 2.5 L2 10 L9.5 17.5" fill="none" stroke="#d3d6e6" stroke-width="2.3" stroke-linecap="round" stroke-linejoin="round"/></svg>
  <svg class="abs" style="left:77px;top:25px" width="20" height="20" viewBox="0 0 20 20"><path d="M1.5 10 H17.5 M10.5 2.5 L18 10 L10.5 17.5" fill="none" stroke="#7d8196" stroke-width="2.3" stroke-linecap="round" stroke-linejoin="round"/></svg>
  <svg class="abs" style="left:131px;top:25px" width="20" height="20" viewBox="0 0 20 20"><path d="M17 10 A7.4 7.4 0 1 1 14.3 4.2" fill="none" stroke="#d3d6e6" stroke-width="2.3" stroke-linecap="round"/><path d="M18.2 1.6 V7.6 H12.2" fill="none" stroke="#d3d6e6" stroke-width="2.3" stroke-linecap="round" stroke-linejoin="round"/></svg>
  <!-- omnibox -->
  <div class="abs" style="left:180px;top:10px;width:1479px;height:49px;border-radius:25px;background:#21253a"></div>
  <div class="abs" style="left:188px;top:17px;width:36px;height:36px;border-radius:18px;background:#383c50"></div>
  <svg class="abs" style="left:195px;top:25px" width="22" height="20" viewBox="0 0 22 20"><circle cx="5" cy="5" r="3" fill="none" stroke="#e3e5f2" stroke-width="2"/><path d="M11 5 H19" stroke="#e3e5f2" stroke-width="2" stroke-linecap="round"/><circle cx="16" cy="15" r="3" fill="none" stroke="#e3e5f2" stroke-width="2"/><path d="M2.5 15 H10.5" stroke="#e3e5f2" stroke-width="2" stroke-linecap="round"/></svg>
  <div class="t" id="url" style="letter-spacing:-0.176px;left:236px;top:22px;font-size:21.8px;line-height:26px;color:#e6e8f4">qa-staging.oqsha.com/#/setup/inspection-category/new</div>
  <svg class="abs" style="left:1563px;top:23px" width="25" height="25" viewBox="0 0 25 25"><circle cx="9.5" cy="9.5" r="7" fill="none" stroke="#dfe2f0" stroke-width="2.2"/><path d="M6 9.5 H13" stroke="#dfe2f0" stroke-width="2.2"/><path d="M14.8 14.8 L22.5 22.5" stroke="#dfe2f0" stroke-width="2.4" stroke-linecap="round"/></svg>
  <svg class="abs" style="left:1610px;top:22px" width="26" height="25" viewBox="0 0 26 25"><path d="M13 2.2 L16.1 9.4 L23.9 10.1 L18 15.2 L19.8 22.8 L13 18.8 L6.2 22.8 L8 15.2 L2.1 10.1 L9.9 9.4Z" fill="none" stroke="#dfe2f0" stroke-width="2.1" stroke-linejoin="round"/></svg>
  <!-- extension 1: folder w/ green arrow -->
  <svg class="abs" style="left:1685px;top:22px" width="28" height="24" viewBox="0 0 28 24"><defs><linearGradient id="fg" x1="0" y1="0" x2="0" y2="1"><stop offset="0" stop-color="#3c5277"/><stop offset="1" stop-color="#18243c"/></linearGradient></defs><path d="M2.4 5.4 H9.4 L11 7.4 H24.6 V21.6 H2.4Z" fill="#22314f"/><path d="M2 9.4 H25.2 L24.8 22.2 H2.4Z" fill="url(#fg)"/><path d="M8.6 8.2 C10.4 2.6 16.6 1.4 20 4.6 L22 2.2 L23.4 10 L15.6 9 L17.8 7 C15.8 5.2 12.6 5.8 11.6 8.8Z" fill="#4fd12c"/></svg>
  <!-- extensions puzzle -->
  <svg class="abs" style="left:1741px;top:21px" width="27" height="27" viewBox="0 0 27 27"><path d="M4 4.6 H9.5 A2.8 2.8 0 0 1 15.1 4.6 H20.6 A2 2 0 0 1 22.6 6.6 V11.8 A2.8 2.8 0 0 1 22.6 17.4 V22.6 A2 2 0 0 1 20.6 24.6 H4 A2 2 0 0 1 2 22.6 V17.8 A3.2 3.2 0 0 0 2 11.4 V6.6 A2 2 0 0 1 4 4.6Z" fill="none" stroke="#d5d7ea" stroke-width="2.3" stroke-linejoin="round"/></svg>
  <div class="abs" style="left:1791px;top:22px;width:2px;height:25px;background:#53576c;border-radius:1px"></div>
  <!-- avatar -->
  <div class="abs" style="left:1817px;top:20px;width:31px;height:31px;border-radius:16px;overflow:hidden;background:#a9c6ee">
    <div class="abs" style="left:-4px;top:0px;width:24px;height:36px;border-radius:12px 10px 4px 8px;background:#241019"></div>
    <div class="abs" style="left:9px;top:5px;width:10px;height:13px;border-radius:5px;background:#bf7d66"></div>
    <div class="abs" style="left:10px;top:9px;width:8px;height:2px;background:#5c2f2b;opacity:.7"></div>
    <div class="abs" style="left:17px;top:3px;width:4px;height:20px;border-radius:2px;background:#2c131c"></div>
    <div class="abs" style="left:10px;top:22px;width:20px;height:12px;border-radius:4px 10px 0 0;background:#3f7fd0"></div>
  </div>
  <svg class="abs" style="left:1883px;top:23px" width="8" height="24" viewBox="0 0 8 24"><circle cx="4" cy="4" r="2.3" fill="#dfe2f0"/><circle cx="4" cy="12" r="2.3" fill="#dfe2f0"/><circle cx="4" cy="20" r="2.3" fill="#dfe2f0"/></svg>
</div>

<!-- bookmarks bar -->
<svg class="abs" style="left:28px;top:139px" width="22" height="22" viewBox="0 0 22 22"><g fill="none" stroke="#c3c6d6" stroke-width="2"><rect x="1.5" y="1.5" width="7" height="7"/><rect x="13.5" y="1.5" width="7" height="7"/><rect x="1.5" y="13.5" width="7" height="7"/><rect x="13.5" y="13.5" width="7" height="7"/></g></svg>
<div class="abs" style="left:72px;top:138px;width:2px;height:24px;background:#53576c;border-radius:1px"></div>
<svg class="abs" style="left:99px;top:140px" width="24" height="20" viewBox="0 0 24 20"><path d="M2 1.2 H9 L11.4 3.8 H20.6 A1.6 1.6 0 0 1 22.2 5.4 V16.8 A1.6 1.6 0 0 1 20.6 18.4 H3 A1.6 1.6 0 0 1 1.4 16.8 V2 Z" fill="none" stroke="#dfe2f0" stroke-width="2" stroke-linejoin="round"/></svg>
<div class="bm" style="letter-spacing:-0.043px;left:135px">Pinestem</div>
<svg class="abs" style="left:233px;top:138px" width="23" height="24" viewBox="0 0 23 24"><defs><linearGradient id="exg" x1="0" y1="0" x2="0" y2="1"><stop offset="0" stop-color="#1a3f7a"/><stop offset="1" stop-color="#1c8fb8"/></linearGradient></defs><rect width="23" height="24" rx="3.5" fill="url(#exg)"/><path d="M3.5 18 L7.5 9.5 L9.6 11.2 L6.5 18Z M8.6 18 L12.8 7.5 L15 9.2 L11.6 18Z M13.8 18 L18 6 L20.4 7.6 L16.8 18Z" fill="#fff"/></svg>
<div class="bm" style="letter-spacing:-0.416px;left:266px">Excel Crash Course |...</div>
<svg class="abs" style="left:464px;top:138px" width="23" height="24" viewBox="0 0 23 24"><rect width="23" height="24" fill="#111"/><path d="M4.5 18.5 L8.2 5.5 L10.4 18.5 L14.6 5.5 L17.6 18.5" fill="none" stroke="#fff" stroke-width="1.5"/></svg>
<div class="bm" style="letter-spacing:-0.255px;left:497px">Traversing an HTML...</div>
<svg class="abs" style="left:694px;top:138px" width="24" height="24" viewBox="0 0 16 16"><path fill="#272b38" d="M8 0C3.58 0 0 3.58 0 8c0 3.54 2.29 6.53 5.47 7.59.4.07.55-.17.55-.38 0-.19-.01-.82-.01-1.49-2.01.37-2.53-.49-2.69-.94-.09-.23-.48-.94-.82-1.13-.28-.15-.68-.52-.01-.53.63-.01 1.08.58 1.23.82.72 1.21 1.87.87 2.33.66.07-.52.28-.87.51-1.07-1.78-.2-3.64-.89-3.64-3.95 0-.87.31-1.59.82-2.15-.08-.2-.36-1.02.08-2.12 0 0 .67-.21 2.2.82.64-.18 1.32-.27 2-.27s1.36.09 2 .27c1.53-1.04 2.2-.82 2.2-.82.44 1.1.16 1.92.08 2.12.51.56.82 1.27.82 2.15 0 3.07-1.87 3.75-3.65 3.95.29.25.54.73.54 1.48 0 1.07-.01 1.93-.01 2.2 0 .21.15.46.55.38A8.01 8.01 0 0 0 16 8c0-4.42-3.58-8-8-8z"/></svg>
<div class="bm" style="letter-spacing:-0.094px;left:727px">XPath Cheatsheet --...</div>
<svg class="abs" style="left:926px;top:138px" width="23" height="24" viewBox="0 0 23 24"><rect width="23" height="24" rx="2" fill="#22263a"/><rect x="3" y="16" width="4" height="4" fill="#6fb7e8"/><text x="14.5" y="21" font-size="24" font-family="Liberation Sans" font-weight="bold" text-anchor="middle" fill="#7cc0ee">*</text></svg>
<div class="bm" style="letter-spacing:-0.137px;left:959px">RegExr: Untitled 59j...</div>
<svg class="abs" style="left:1156px;top:138px" width="23" height="24" viewBox="0 0 23 24"><rect width="23" height="24" fill="#111"/><path d="M4.5 18.5 L8.2 5.5 L10.4 18.5 L14.6 5.5 L17.6 18.5" fill="none" stroke="#fff" stroke-width="1.5"/></svg>
<div class="bm" style="letter-spacing:-0.202px;left:1190px">Regular expression...</div>
<svg class="abs" style="left:1388px;top:139px" width="22" height="22" viewBox="0 0 22 22"><circle cx="11" cy="11" r="10" fill="#d3d6e6"/><path d="M3 8.5 C5 8 6.5 9.5 8 9.5 C9.5 9.5 9.5 11 8.5 12 C7.5 13 9 14.5 9.5 16 C10 17.5 8.5 19 7.5 19.5 C4.5 18 2.5 15 2.5 11.5Z M12.5 2.2 C13 4 12 5 13.5 6 C15 7 16.5 5.5 18 6.5 C16.8 4 14.8 2.6 12.5 2.2Z M14 11 C15.5 10.2 17.5 10.8 19 12 C19 14.5 17.8 16.5 16 18 C15 16.8 15.6 15.5 14.6 14.5 C13.4 13.4 13 11.8 14 11Z" fill="#383c50"/></svg>
<div class="bm" style="letter-spacing:-0.118px;left:1421px">HTML Rendering He...</div>
<svg class="abs" style="left:1680px;top:143px" width="17" height="14" viewBox="0 0 17 14"><path d="M2 1.5 L7.5 7 L2 12.5 M9.5 1.5 L15 7 L9.5 12.5" fill="none" stroke="#dfe2f0" stroke-width="2" stroke-linecap="round" stroke-linejoin="round"/></svg>
<div class="abs" style="left:1723px;top:138px;width:2px;height:24px;background:#53576c;border-radius:1px"></div>
<svg class="abs" style="left:1748px;top:140px" width="24" height="20" viewBox="0 0 24 20"><path d="M2 1.2 H9 L11.4 3.8 H20.6 A1.6 1.6 0 0 1 22.2 5.4 V16.8 A1.6 1.6 0 0 1 20.6 18.4 H3 A1.6 1.6 0 0 1 1.4 16.8 V2 Z" fill="none" stroke="#dfe2f0" stroke-width="2" stroke-linejoin="round"/></svg>
<div class="bm" style="letter-spacing:0.043px;left:1785px">All Bookmarks</div>
<div id="chromeline"></div>

<!-- shared symbols -->
<svg width="0" height="0" style="position:absolute">
  <defs>
    <symbol id="xico" viewBox="0 0 14 14"><path d="M1.6 1.6 L12.4 12.4 M12.4 1.6 L1.6 12.4" stroke="#e3e5f2" stroke-width="2.8" stroke-linecap="round"/></symbol>
    <symbol id="qfav" viewBox="0 0 26 26"><path d="M5.28 6.62 A9.3 9.3 0 0 1 18.38 5.48" fill="none" stroke="#fb5a22" stroke-width="5"/><path d="M18.38 5.48 A9.3 9.3 0 0 1 21.14 15.78" fill="none" stroke="#2277e0" stroke-width="5"/><path d="M21.14 15.78 A9.3 9.3 0 0 1 12.72 21.89" fill="none" stroke="#1ea62c" stroke-width="5"/><path d="M12.72 21.89 A9.3 9.3 0 0 1 3.66 15.78" fill="none" stroke="#fbc417" stroke-width="5"/><path d="M3.66 15.78 A9.3 9.3 0 0 1 5.28 6.62" fill="none" stroke="#19b2f2" stroke-width="5"/><path d="M15.4 17.2 L21.4 25" stroke="#1ea62c" stroke-width="5"/></symbol>
    <symbol id="woodfav" viewBox="0 0 26 26">
      <path d="M15.5 6 L24.4 3 L21.6 5.6 L25 6.2 L20.6 8 L22.8 10.8 L17.4 8.6Z" fill="#2f7f2c"/>
      <path d="M17 7 L23.6 4" stroke="#56b040" stroke-width="0.9"/>
      <circle cx="11.2" cy="14" r="9.6" fill="#dc935c"/>
      <circle cx="11.2" cy="14" r="8" fill="#efad7a"/>
      <circle cx="11.2" cy="14" r="5" fill="none" stroke="#e59a62" stroke-width="1.2"/>
      <circle cx="11.2" cy="14" r="2" fill="#e59a62"/>
    </symbol>
  </defs>
</svg>

<!--/CHROME-->
<div id="taskbar">
  <!-- start -->
  <svg class="abs" style="left:24px;top:17px" width="25" height="25" viewBox="0 0 25 25"><path d="M0 3.6 L10.4 2.1 V11.9 H0Z M11.7 1.9 L25 0 V11.9 H11.7Z M0 13.1 H10.4 V22.9 L0 21.4Z M11.7 13.1 H25 V25 L11.7 23.1Z" fill="#fff"/></svg>
  <!-- search box -->
  <div class="abs" style="left:73px;top:0;width:431px;height:60px;background:#f2f2f2;border:2px solid #c2c2c2;border-bottom:none"></div>
  <svg class="abs" style="left:89px;top:18px" width="26" height="26" viewBox="0 0 26 26"><circle cx="16" cy="10" r="7.2" fill="none" stroke="#1b1b1b" stroke-width="1.9"/><path d="M10.8 15.2 L1.6 24.4" stroke="#1b1b1b" stroke-width="2" stroke-linecap="round"/></svg>
  <div class="t" style="letter-spacing:-0.796px;left:132px;top:18px;font-size:24px;line-height:28px;color:#2a2a2a">Type here to search</div>
  <!-- falafel plate -->
  <svg class="abs" style="left:393.5px;top:0" width="100.2" height="60" viewBox="200 0 1480 886">
    <defs>
      <linearGradient id="plt" x1="0" y1="0" x2="0" y2="1"><stop offset="0" stop-color="#6f7a8e"/><stop offset=".35" stop-color="#aab2c0"/><stop offset="1" stop-color="#dfe3ea"/></linearGradient>
      <linearGradient id="plr" x1="0" y1="0" x2="0" y2="1"><stop offset="0" stop-color="#c3cde0"/><stop offset=".6" stop-color="#d3dbe8"/><stop offset="1" stop-color="#8e98aa"/></linearGradient>
      <radialGradient id="fb" cx=".38" cy=".3" r=".75"><stop offset="0" stop-color="#e6aa66"/><stop offset=".55" stop-color="#b97a36"/><stop offset="1" stop-color="#8a4f16"/></radialGradient>
      <linearGradient id="lt" x1="0" y1="0" x2="1" y2="1"><stop offset="0" stop-color="#a6e05a"/><stop offset="1" stop-color="#5fae2c"/></linearGradient>
      <linearGradient id="pt" x1="0" y1="0" x2="1" y2="0"><stop offset="0" stop-color="#f7e0ae"/><stop offset="1" stop-color="#dcb377"/></linearGradient>
    </defs>
    <ellipse cx="938" cy="590" rx="728" ry="205" fill="url(#plr)"/>
    <ellipse cx="938" cy="560" rx="690" ry="175" fill="url(#plt)"/>
    <path d="M530 300 L760 130 L1000 88 L1120 150 L1530 470 L1480 560 L1200 640 L1080 660 L700 690 L480 600 L450 540Z" fill="#eac98f"/>
    <path d="M570 330 L800 160 L940 140 L900 420 L640 470Z" fill="#a06d1c"/>
    <path d="M1000 88 L1120 150 L1530 470 L1490 555 L1200 640 L1130 520 L1080 330Z" fill="url(#pt)"/>
    <path d="M915 215 L1040 80 L1095 100 L1100 170 L1135 250 L1075 290 L1090 365 L985 345Z" fill="url(#lt)"/>
    <path d="M400 315 L480 295 L575 340 L520 520 L400 480 L430 400Z" fill="url(#lt)"/>
    <path d="M470 540 L600 600 L720 640 L560 615Z" fill="#79c23a"/>
    <ellipse cx="1160" cy="200" rx="16" ry="24" fill="#8f4f1e" transform="rotate(-25 1160 200)"/>
    <ellipse cx="1290" cy="322" rx="24" ry="15" fill="#8f4f1e"/>
    <ellipse cx="1285" cy="465" rx="18" ry="26" fill="#8f4f1e" transform="rotate(-20 1285 465)"/>
    <circle cx="840" cy="322" r="127" fill="url(#fb)"/>
    <circle cx="602" cy="470" r="112" fill="url(#fb)"/>
    <circle cx="1025" cy="492" r="122" fill="url(#fb)"/>
    <circle cx="786" cy="522" r="127" fill="url(#fb)"/>
    <path d="M450 560 C520 640 640 690 760 690 L1100 655 L1200 640 L1150 560 C1100 640 900 680 760 650 C640 690 500 620 450 560Z" fill="#f6e2b0"/>
  </svg>
  <!-- task view -->
  <svg class="abs" style="left:526px;top:16px" width="30" height="28" viewBox="526 1036 30 28"><g fill="none" stroke="#fff" stroke-width="1.5"><path d="M528.7 1041.4 V1038.6 H543.3 V1041.4"/><rect x="528.7" y="1044.6" width="14.6" height="10.4"/><path d="M528.7 1061 V1058.2 H543.3 V1061"/><path d="M550.7 1038 V1061.4"/></g><rect x="548.9" y="1045" width="3.6" height="3.6" fill="#fff"/></svg>
  <!-- copilot -->
  <svg class="abs" style="left:600px;top:15px" width="34" height="31" viewBox="0 0 34 31"><defs><linearGradient id="cp1" x1="0" y1="0" x2="0" y2="1"><stop offset="0" stop-color="#1b7fe6"/><stop offset=".45" stop-color="#2fc39a"/><stop offset=".8" stop-color="#d8d83e"/><stop offset="1" stop-color="#f7c433"/></linearGradient><linearGradient id="cp2" x1="0" y1="0" x2="0" y2="1"><stop offset="0" stop-color="#a24fe6"/><stop offset=".5" stop-color="#ee4f93"/><stop offset="1" stop-color="#fb9a3a"/></linearGradient></defs><path d="M26 31 H14 C11 31 9.5 29 8.5 26 L15 26 C18 26 19 24 20 21 L23 11 C24 8 26 7 29 8 C33 9 34.5 12 33.5 16 L30.5 27 C29.5 30 28 31 26 31Z" fill="url(#cp2)"/><path d="M8 0 H20 C23 0 24.5 2 25.5 5 L19 5 C16 5 15 7 14 10 L11 20 C10 23 8 24 5 23 C1 22 -0.5 19 0.5 15 L3.5 4 C4.5 1 6 0 8 0Z" fill="url(#cp1)"/><path d="M20 0 C23 0 24.5 2 25.5 5 L23 11 C22 9 21 7 19 5Z" fill="#1d4fcf" opacity=".8"/><path d="M14 31 C11 31 9.5 29 8.5 26 L11 20 C12 23 13 25 15 26Z" fill="#e8502e" opacity=".8"/></svg>
  <!-- file explorer -->
  <svg class="abs" style="left:674px;top:14px" width="35" height="31" viewBox="0 0 35 31"><path d="M1 3.5 C1 2 2 1 3.5 1 H12 L15.5 4.5 H31.5 C33 4.5 34 5.5 34 7 V10 H1Z" fill="#e8a91f"/><path d="M1 8 H34 V27.5 C34 29 33 30 31.5 30 H3.5 C2 30 1 29 1 27.5Z" fill="#fcd75a"/><path d="M9 30 V20.5 C9 19.5 9.6 19 10.5 19 H24.5 C25.4 19 26 19.5 26 20.5 V30 H21.5 V24 H13.5 V30Z" fill="#3f94e4"/></svg>
  <!-- visual studio -->
  <svg class="abs" style="left:749px;top:12px" width="36" height="36" viewBox="0 0 36 36"><path d="M26 1 L35 5 V31 L26 35 L11 21 L4.5 26 L1 24 V12 L4.5 10 L11 15Z" fill="#8a5fd6"/><path d="M26 1 L35 5 V31 L26 35Z" fill="#a77ff0"/><path d="M26 11 V25 L17 18Z M4.6 14.6 V21.4 L8 18Z" fill="#1f2a31"/></svg>
  <!-- chrome (active) -->
  <div class="abs" style="left:806px;top:0;width:73px;height:60px;background:#5e696e"></div>
  <svg class="abs" style="left:824px;top:12px" width="36" height="36" viewBox="0 0 36 36"><use href="#chromeico"/></svg>
  <!-- postman -->
  <svg class="abs" style="left:899px;top:12px" width="36" height="36" viewBox="0 0 36 36"><circle cx="18" cy="18" r="17.8" fill="#ff6c37"/><path d="M8.2 27.4 L13 22.4 L20.6 13.8 L24 16.6 L16 24.2 L10 28.4Z" fill="#fff"/><path d="M14.8 19.8 L18.2 23 M16.8 17.6 L20.2 20.6 M18.8 15.6 L22 18.4" stroke="#ff6c37" stroke-width="0.8"/><circle cx="25.4" cy="10.6" r="2.9" fill="#fff"/><path d="M22.6 14.4 L24.6 12.2" stroke="#fff" stroke-width="1.6"/><circle cx="26" cy="10.2" r="1" fill="#ff6c37"/></svg>
  <!-- chrome w/ profile -->
  <svg class="abs" style="left:973.5px;top:12px" width="36" height="36" viewBox="0 0 36 36"><use href="#chromeico"/></svg>
  <div class="abs" style="left:989px;top:27px;width:24px;height:24px;border-radius:12px;background:#a53fc4;color:#f3d9fa;font-size:15px;line-height:24px;text-align:center;font-weight:bold">S</div>
  <!-- teams (attention) -->
  <div class="abs" style="left:1031px;top:0;width:73px;height:60px;background:#a8672d"></div>
  <svg class="abs" style="left:1049px;top:14px" width="36" height="32" viewBox="0 0 36 32"><circle cx="26" cy="7" r="4.6" fill="#7b83eb"/><circle cx="16" cy="5.6" r="5.4" fill="#5b62d4"/><rect x="20" y="12" width="14" height="14" rx="3" fill="#7b83eb"/><rect x="7" y="11" width="18" height="19" rx="3" fill="#5059c9"/><rect x="1" y="9" width="16" height="16" rx="2" fill="#464eb8"/><path d="M5 13 H13 M9 13 V22" stroke="#fff" stroke-width="2"/></svg>
  <div class="abs" style="left:1065px;top:27px;width:23px;height:23px;border-radius:12px;background:#c8241f;color:#fff;font-size:17px;line-height:23px;text-align:center">4</div>
  <!-- mysql workbench -->
  <svg class="abs" style="left:1125px;top:12px" width="35" height="35" viewBox="0 0 35 35"><rect x="0" y="1" width="34" height="33" rx="3" fill="#2f6d98"/><path d="M5 8 C10 6 16 10 19 15 C22 19 27 21 30 27 L26 25 L27 30 C22 26 20 24 17 24 C13 24 9 18 8 13Z" fill="none" stroke="#fff" stroke-width="1.5"/><path d="M24 3 L29 8 M27 2 L31 6" stroke="#fff" stroke-width="2.2"/></svg>
  <!-- underlines -->
  <div class="tbu" style="left:662px;width:61px"></div>
  <div class="tbu" style="left:806px;width:73px"></div>
  <div class="tbu" style="left:886px;width:62px"></div>
  <div class="tbu" style="left:962px;width:61px"></div>
  <div class="tbu" style="left:1031px;width:73px;background:#ff7b00"></div>
  <div class="tbu" style="left:1111px;width:62px"></div>
  <!-- weather -->
  <svg class="abs" style="left:1298px;top:13px" width="40" height="36" viewBox="0 0 40 36"><defs><linearGradient id="sun" x1="0" y1="0" x2="0" y2="1"><stop offset="0" stop-color="#ffc21a"/><stop offset="1" stop-color="#f0741c"/></linearGradient></defs><circle cx="17" cy="18" r="12.5" fill="url(#sun)"/><path d="M1 18 H26 M0 23 H28 M3 28 H25" stroke="#f7d9a0" stroke-width="2.2" stroke-linecap="round"/><circle cx="28" cy="9" r="7.6" fill="#c8241f"/><text x="28" y="13.6" font-size="12.5" font-family="Liberation Sans" text-anchor="middle" fill="#fff">1</text></svg>
  <div class="t" style="letter-spacing:-0.395px;left:1348px;top:20px;font-size:19.5px;line-height:24px;color:#fff">38°C</div>
  <!-- tray -->
  <svg class="abs" style="left:1437px;top:24px" width="16" height="10" viewBox="0 0 16 10"><path d="M1 9 L8 1.5 L15 9" fill="none" stroke="#fff" stroke-width="1.4"/></svg>
  <svg class="abs" style="left:1479px;top:22px" width="26" height="17" viewBox="0 0 26 17"><rect x="3" y="4" width="20.5" height="10.5" fill="none" stroke="#fff" stroke-width="1.4"/><path d="M23.5 7.5 H25.2 V11 H23.5 M5.6 4 V0.6 M9.2 4 V0.6 M4.4 2.4 H10.4 M1 14.5 H6" stroke="#fff" stroke-width="1.3" fill="none"/></svg>
  <svg class="abs" style="left:1529px;top:20px" width="24" height="22" viewBox="0 0 24 22"><path d="M1.5 7.4 H5.8 L11 2.4 V19.6 L5.8 14.6 H1.5Z" fill="none" stroke="#fff" stroke-width="1.4" stroke-linejoin="round"/><path d="M14.6 7.2 A5.4 5.4 0 0 1 14.6 14.8 M17.6 4 A9.6 9.6 0 0 1 17.6 18" fill="none" stroke="#fff" stroke-width="1.4" stroke-linecap="round"/></svg>
  <svg class="abs" style="left:1578px;top:18px" width="24" height="26" viewBox="0 0 24 26"><rect x="3" y="7" width="12" height="12" rx="2.4" fill="none" stroke="#fff" stroke-width="1.4"/><path d="M15 11 L20.4 8 V18 L15 15" fill="none" stroke="#fff" stroke-width="1.4" stroke-linejoin="round"/><path d="M3 3.4 C7 0.6 12 0.6 16 3.4 M3 22.6 C7 25.4 12 25.4 16 22.6" fill="none" stroke="#fff" stroke-width="1.3"/></svg>
  <svg class="abs" style="left:1631px;top:20px" width="30" height="22" viewBox="0 0 30 22"><path d="M4 19.4 C1 17 3 12 6.4 12.6 C9 13.2 8 17.6 5 19.8 M6 18 L14 2.6 C15 1 17.4 2.2 16.6 4 L9.4 19 L5.2 20.6Z" fill="none" stroke="#fff" stroke-width="1.4" stroke-linejoin="round"/><circle cx="23.6" cy="10.4" r="5" fill="#fff"/></svg>
  <div class="t" style="letter-spacing:-0.531px;left:1683px;top:21px;font-size:15.5px;line-height:22px;color:#fff">ENG</div>
  <div class="t" style="letter-spacing:-0.388px;left:1762px;top:6px;font-size:18.5px;line-height:22px;color:#fff">11:58</div>
  <div class="t" style="letter-spacing:-0.264px;left:1737px;top:33px;font-size:18.5px;line-height:22px;color:#fff">12-06-2025</div>
  <svg class="abs" style="left:1856px;top:12px" width="40" height="46" viewBox="0 0 40 46"><path d="M2 6 H10 V3 H20 V6 H25 V25 H10 V29 L6 25 H2Z" fill="#fff"/><path d="M6 11 H19 M6 15 H19 M6 19 H15" stroke="#1f2a31" stroke-width="1.3"/><circle cx="25" cy="30" r="11.6" fill="#20282d" stroke="#5a6266" stroke-width="1"/><text x="25" y="36.4" font-size="18" font-family="Liberation Sans" font-weight="bold" text-anchor="middle" fill="#fff">4</text></svg>
  <div class="abs" style="left:1912px;top:0;width:1px;height:60px;background:#59636a"></div>
</div>
<svg width="0" height="0" style="position:absolute"><defs>
  <symbol id="chromeico" viewBox="0 0 36 36"><circle cx="18" cy="18" r="17" fill="#fff"/><path d="M2.84 9.25 A17.5 17.5 0 0 1 33.16 9.25 L18 9.25 A8.75 8.75 0 0 0 10.42 22.375Z" fill="#e33b2e"/><path d="M33.16 9.25 A17.5 17.5 0 0 1 18 35.5 L25.58 22.375 A8.75 8.75 0 0 0 18 9.25Z" fill="#fcc31e"/><path d="M18 35.5 A17.5 17.5 0 0 1 2.84 9.25 L10.42 22.375 A8.75 8.75 0 0 0 25.58 22.375Z" fill="#2da94f"/><circle cx="18" cy="18" r="8.4" fill="#fff"/><circle cx="18" cy="18" r="6.7" fill="#3b7de9"/></symbol>
</defs></svg>

<svg class="abs" style="left:0;top:940px" width="1920" height="140" viewBox="0 940 1920 140"><g font-family="Liberation Sans" font-size="107.5" fill="#fff"><text transform="translate(1003.75 1054.00) scale(1.027 1)" text-anchor="middle">2</text><text transform="translate(1061.00 1054.00) scale(0.913 1)" text-anchor="middle">0</text><text transform="translate(1119.50 1054.00) scale(1.027 1)" text-anchor="middle">2</text><text transform="translate(1181.40 1054.00) scale(0.906 1)" text-anchor="middle">5</text><rect x="1207.60" y="1020.1" width="26" height="6.8"/><text transform="translate(1263.50 1054.00) scale(0.913 1)" text-anchor="middle">0</text><text transform="translate(1322.30 1054.00) scale(0.912 1)" text-anchor="middle">6</text><rect x="1352.25" y="1020.1" width="26" height="6.8"/><path d="M1407.6 979.4 H1417.3 V1054.4 H1407.6 V990 L1387.7 998.3 V991.4Z"/><text transform="translate(1467.75 1054.00) scale(1.027 1)" text-anchor="middle">2</text><text transform="translate(1550.75 1054.00) scale(0.913 1)" text-anchor="middle">0</text><text transform="translate(1608.00 1054.00) scale(0.920 1)" text-anchor="middle">9</text><circle cx="1650.50" cy="1003.8" r="6.2"/><circle cx="1650.50" cy="1049" r="6.2"/><text transform="translate(1691.50 1054.00) scale(0.913 1)" text-anchor="middle">0</text><text transform="translate(1750.30 1054.00) scale(1.029 1)" text-anchor="middle">7</text><circle cx="1791.50" cy="1003.8" r="6.2"/><circle cx="1791.50" cy="1049" r="6.2"/><text transform="translate(1833.25 1054.00) scale(0.913 1)" text-anchor="middle">0</text><text transform="translate(1889.90 1054.00) scale(0.936 1)" text-anchor="middle">3</text></g></svg>

</body>
</html>
